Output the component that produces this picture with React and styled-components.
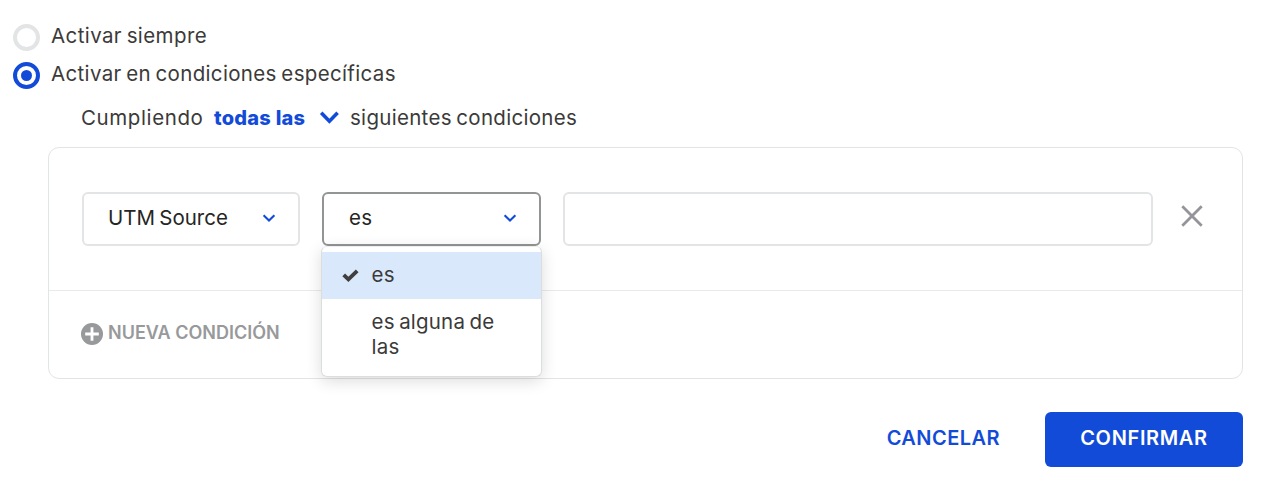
import React from "react";
import styled, { createGlobalStyle } from "styled-components";

const GlobalStyle = createGlobalStyle`
  * { box-sizing: border-box; }
  body {
    margin: 0;
    background: #fff;
    color: #3b3a39;
    font-family: Inter, "Liberation Sans", sans-serif;
    font-size: 20.5px;
    font-weight: 400;
    line-height: 28px;
  }
  button { font: inherit; border: 0; background: none; padding: 0; cursor: pointer; }
`;

const Page = styled.main`
  width: 1273px;
  height: 487px;
  padding: 22px 30px 0 13px;
  display: flex;
  flex-direction: column;
  overflow: hidden;
`;

const RadioRow = styled.label`
  display: flex;
  align-items: flex-start;
  gap: 11px;
  height: 38px;
`;

const Radio = styled.span`
  width: 27px;
  height: 27px;
  margin-top: 2px;
  border-radius: 50%;
  border: 4px solid ${(p) => (p.$on ? "#134bd9" : "#e3e4e5")};
  display: flex;
  align-items: center;
  justify-content: center;
  &::after {
    content: "";
    width: 11px;
    height: 11px;
    border-radius: 50%;
    background: ${(p) => (p.$on ? "#134bd9" : "transparent")};
  }
`;

const Text = styled.span`
  white-space: nowrap;
  letter-spacing: ${(p) => p.$track || 0}px;
  word-spacing: ${(p) => p.$wordGap ?? -1.5}px;
`;

const MatchRow = styled.div`
  display: flex;
  height: 28px;
  margin: 6px 0 0 68px;
`;

const MatchLead = styled.span`
  width: 133px;
`;

const MatchPicker = styled.button`
  display: flex;
  align-items: center;
  width: 125px;
  margin-right: 11px;
  justify-content: space-between;
  color: #134bd9;
  font-size: 20px;
  font-weight: 800;
`;

const Card = styled.section`
  margin: 15px 0 0 35px;
  height: 232px;
  border: 1px solid #e3e4e5;
  border-radius: 11px;
`;

const Condition = styled.div`
  display: flex;
  height: 143px;
  padding: 44px 0 0 33px;
  border-bottom: 1px solid #e9eaea;
`;

const Select = styled.div`
  position: relative;
  width: ${(p) => p.$width}px;
  height: 54px;
  margin-right: 22px;
  padding: 0 22px 2px ${(p) => p.$inset}px;
  display: flex;
  align-items: center;
  justify-content: space-between;
  border: 2px solid ${(p) => (p.$open ? "#939494" : "#e3e4e5")};
  border-radius: 6px;
  color: #262524;
`;

const ValueInput = styled.input`
  width: 590px;
  height: 54px;
  border: 2px solid #e3e4e5;
  border-radius: 6px;
  background: #fff;
  outline: none;
`;

const RemoveButton = styled.button`
  width: 22px;
  height: 22px;
  margin: 13px 0 0 28px;
  display: flex;
`;

const Menu = styled.ul`
  position: absolute;
  top: 52px;
  left: -3px;
  width: 221px;
  height: 131px;
  margin: 0;
  padding: 5px 0 0;
  list-style: none;
  background: #fff;
  border: 1px solid #dcdddd;
  border-top-color: #eeeeee;
  border-radius: 6px;
  box-shadow: 0 4px 16px rgba(0, 0, 0, 0.14);
  color: #3b3a39;
`;

const Option = styled.li`
  display: grid;
  grid-template-columns: 29.5px 140px;
  padding: 10px 0 12px 20px;
  line-height: 25px;
  background: ${(p) => (p.$selected ? "#dae8fb" : "transparent")};
  svg { margin-top: 7px; }
`;

const AddRow = styled.div`
  display: flex;
  height: 87px;
  padding: 28px 0 0 32px;
`;

const AddButton = styled.button`
  display: flex;
  align-items: flex-start;
  height: 28px;
  gap: 5px;
  color: #97999b;
  font-size: 18px;
  font-weight: 600;
  svg { margin-top: 4px; }
`;

const Actions = styled.footer`
  display: flex;
  justify-content: flex-end;
  margin-top: 33px;
  gap: 45px;
`;

const CancelButton = styled.button`
  height: 52px;
  color: #134bd9;
  font-size: 20px;
  font-weight: 600;
`;

const ConfirmButton = styled.button`
  width: 198px;
  height: 55px;
  padding-bottom: 3px;
  border-radius: 6px;
  background: #134bd9;
  color: #fff;
  font-size: 20px;
  font-weight: 600;
`;

const SmallChevron = () => (
  <svg width="14" height="10" viewBox="0 0 14 10" fill="none">
    <path d="M1.6 2.2 7 7.5l5.4-5.3" stroke="#134bd9" strokeWidth="2.1" />
  </svg>
);

const LargeChevron = () => (
  <svg width="20" height="14" viewBox="0 0 20 14" fill="none">
    <path d="m2.2 1.8 8.2 8.4 8.2-8.4" stroke="#134bd9" strokeWidth="3.6" />
  </svg>
);

const Check = () => (
  <svg width="17" height="13" viewBox="0 0 17 13" fill="none">
    <path d="m1.7 5.8 4.7 4.5 8.8-8.4" stroke="#403f3e" strokeWidth="3.9" />
  </svg>
);

const Cross = () => (
  <svg width="22" height="22" viewBox="0 0 22 22" fill="none">
    <path d="m1.3 1.3 19.4 19.4M20.7 1.3 1.3 20.7" stroke="#939598" strokeWidth="2.8" />
  </svg>
);

const PlusCircle = () => (
  <svg width="22" height="22" viewBox="0 0 22 22" fill="none">
    <circle cx="11" cy="11" r="11" fill="#97999b" />
    <path d="M11 4.2v13.6M4.2 11h13.6" stroke="#fff" strokeWidth="2.8" />
  </svg>
);

export default function App() {
  return (
    <>
      <GlobalStyle />
      <Page>
        <RadioRow>
          <Radio />
          <Text $track={0.4}>Activar siempre</Text>
        </RadioRow>
        <RadioRow>
          <Radio $on />
          <Text $track={0.34}>Activar en condiciones específicas</Text>
        </RadioRow>
        <MatchRow>
          <MatchLead>
            <Text $track={0.6}>Cumpliendo</Text>
          </MatchLead>
          <MatchPicker>
            <Text $track={0.25} $wordGap={0}>todas las</Text>
            <LargeChevron />
          </MatchPicker>
          <Text $track={0.3}>siguientes condiciones</Text>
        </MatchRow>
        <Card>
          <Condition>
            <Select $width={218} $inset={24}>
              <Text $track={0}>UTM Source</Text>
              <SmallChevron />
            </Select>
            <Select $width={219} $inset={25} $open>
              <Text $track={0.3}>es</Text>
              <SmallChevron />
              <Menu>
                <Option $selected>
                  <Check />
                  <Text $track={0.3}>es</Text>
                </Option>
                <Option>
                  <span />
                  <Text $track={0.2}>es alguna de<br />las</Text>
                </Option>
              </Menu>
            </Select>
            <ValueInput />
            <RemoveButton aria-label="Eliminar">
              <Cross />
            </RemoveButton>
          </Condition>
          <AddRow>
            <AddButton>
              <PlusCircle />
              <Text $track={0} $wordGap={0}>NUEVA CONDICIÓN</Text>
            </AddButton>
          </AddRow>
        </Card>
        <Actions>
          <CancelButton><Text $track={0.45}>CANCELAR</Text></CancelButton>
          <ConfirmButton><Text $track={0.65}>CONFIRMAR</Text></ConfirmButton>
        </Actions>
      </Page>
    </>
  );
}
